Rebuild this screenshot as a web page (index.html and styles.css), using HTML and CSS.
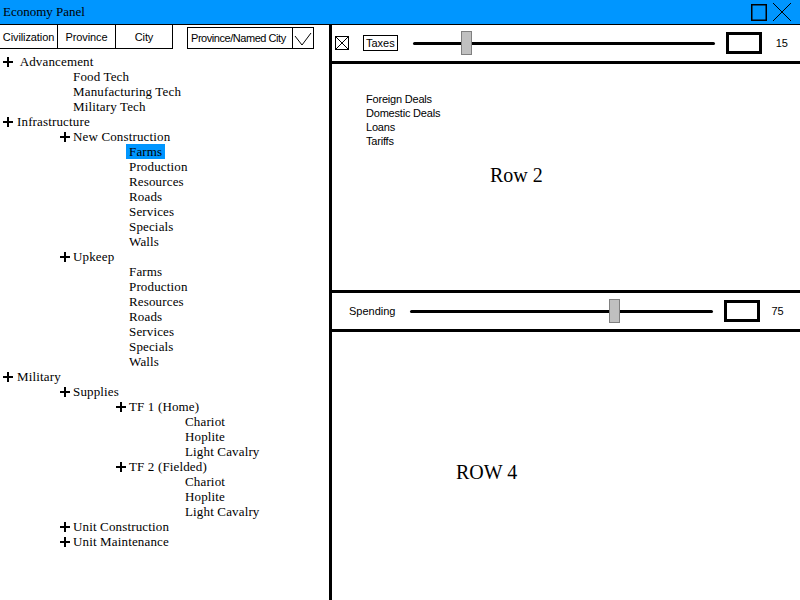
FILE: index.html
```html
<!DOCTYPE html>
<html lang="en">
<head>
  <meta charset="UTF-8">
  <title>Economy Panel</title>
  <link rel="stylesheet" href="styles.css">
</head>
<body>
  <div class="window">
    <div class="titlebar">
      <span class="title">Economy Panel</span>
      <div class="controls">
        <svg class="ctl" width="16" height="17" viewBox="0 0 16 17"><rect x="0.75" y="0.75" width="14.5" height="15.5" fill="none" stroke="#000" stroke-width="1.5"/></svg>
        <svg class="ctl" width="18" height="18" viewBox="0 0 18 18"><path d="M0 0L18 18M18 0L0 18" stroke="#000" stroke-width="1"/></svg>
      </div>
    </div>

    <div class="main">
      <!-- Arvore de categorias -->
      <div class="left">
        <div class="toolbar">
          <div class="tabs">
            <div class="tab">Civilization</div>
            <div class="tab">Province</div>
            <div class="tab">City</div>
          </div>
          <div class="dropdown">
            <span class="dropdown-text">Province/Named City</span>
            <span class="dropdown-arrow">
              <svg width="20" height="21" viewBox="0 0 20 21"><polyline points="2,8 9,17 18,5" fill="none" stroke="#000" stroke-width="1"/></svg>
            </span>
          </div>
        </div>
        <div class="tree" id="tree"></div>
      </div>

      <!-- Paineis da direita -->
      <div class="right">
        <div class="row row-slider">
          <span class="checkbox">
            <svg width="14" height="14" viewBox="0 0 14 14"><rect x="0.5" y="0.5" width="13" height="13" fill="none" stroke="#000"/><path d="M1 1L13 13M13 1L1 13" stroke="#000"/></svg>
          </span>
          <span class="label-box">Taxes</span>
          <div class="slider slider-taxes">
            <div class="track"></div>
            <div class="thumb" style="left: 48px"></div>
          </div>
          <div class="value-box"></div>
          <span class="value">15</span>
        </div>

        <div class="row row-content">
          <ul class="deal-list">
            <li>Foreign Deals</li>
            <li>Domestic Deals</li>
            <li>Loans</li>
            <li>Tariffs</li>
          </ul>
          <div class="big-label row2-label">Row 2</div>
        </div>

        <div class="row row-slider row-spending">
          <span class="plain-label">Spending</span>
          <div class="slider slider-spending">
            <div class="track"></div>
            <div class="thumb" style="left: 199px"></div>
          </div>
          <div class="value-box"></div>
          <span class="value">75</span>
        </div>

        <div class="row row-last">
          <div class="big-label row4-label">ROW 4</div>
        </div>
      </div>
    </div>
  </div>

  <script>
    // [nivel, tem "+", texto, selecionado]
    const itens = [
      [0, true, " Advancement"],
      [1, false, "Food Tech"],
      [1, false, "Manufacturing Tech"],
      [1, false, "Military Tech"],
      [0, true, "Infrastructure"],
      [1, true, "New Construction"],
      [2, false, "Farms", true],
      [2, false, "Production"],
      [2, false, "Resources"],
      [2, false, "Roads"],
      [2, false, "Services"],
      [2, false, "Specials"],
      [2, false, "Walls"],
      [1, true, "Upkeep"],
      [2, false, "Farms"],
      [2, false, "Production"],
      [2, false, "Resources"],
      [2, false, "Roads"],
      [2, false, "Services"],
      [2, false, "Specials"],
      [2, false, "Walls"],
      [0, true, "Military"],
      [1, true, "Supplies"],
      [2, true, "TF 1 (Home)"],
      [3, false, "Chariot"],
      [3, false, "Hoplite"],
      [3, false, "Light Cavalry"],
      [2, true, "TF 2 (Fielded)"],
      [3, false, "Chariot"],
      [3, false, "Hoplite"],
      [3, false, "Light Cavalry"],
      [1, true, "Unit Construction"],
      [1, true, "Unit Maintenance"]
    ];

    const tree = document.getElementById('tree');
    const plusSvg = '<svg class="plus" width="10" height="10" viewBox="0 0 10 10"><path d="M0 5H10M5 0V10" stroke="#000" stroke-width="2"/></svg>';

    itens.forEach(item => {
      const linha = document.createElement('div');
      linha.className = 'node lv' + item[0];
      const texto = document.createElement('span');
      texto.className = item[3] ? 'node-text selected' : 'node-text';
      texto.textContent = item[2];
      if (item[1]) linha.insertAdjacentHTML('beforeend', plusSvg);
      linha.appendChild(texto);
      tree.appendChild(linha);
    });
  </script>
</body>
</html>
```

FILE: styles.css
```css
/* Estilos gerais */
body {
  margin: 0;
  padding: 0;
  background-color: #fff;
  font-family: "Liberation Serif", "Times New Roman", serif;
  color: #000;
}

.window {
  width: 800px;
  height: 600px;
  display: flex;
  flex-direction: column;
  overflow: hidden;
}

/* Barra de titulo */
.titlebar {
  height: 25px;
  box-sizing: border-box;
  background-color: #0096ff;
  border-bottom: 1px solid #000;
  display: flex;
  align-items: center;
  justify-content: space-between;
  padding-left: 3px;
  font-size: 13px;
}

.controls {
  display: flex;
  align-items: center;
  gap: 6px;
  margin-right: 9px;
}

.ctl {
  display: block;
}

.main {
  flex: 1;
  display: flex;
  min-height: 0;
}

/* Coluna da esquerda */
.left {
  width: 332px;
  box-sizing: border-box;
  border-right: 3px solid #000;
  display: flex;
  flex-direction: column;
}

.toolbar {
  display: flex;
  align-items: flex-start;
}

.tabs {
  display: flex;
  height: 24px;
}

.tab {
  width: 58px;
  box-sizing: border-box;
  border-right: 1px solid #000;
  border-bottom: 1px solid #000;
  display: flex;
  align-items: center;
  justify-content: center;
  font-family: "Liberation Sans", Arial, sans-serif;
  font-size: 11px;
  letter-spacing: -0.1px;
}

.tab:last-child {
  width: 57px;
}

.dropdown {
  margin-left: 14px;
  margin-top: 2px;
  width: 127px;
  height: 22px;
  box-sizing: border-box;
  border: 1px solid #000;
  display: flex;
  font-family: "Liberation Sans", Arial, sans-serif;
  font-size: 11px;
}

.dropdown-text {
  flex: 1;
  display: flex;
  align-items: center;
  padding-left: 3px;
  white-space: nowrap;
  letter-spacing: -0.45px;
  overflow: hidden;
}

.dropdown-arrow {
  width: 20px;
  flex: none;
  border-left: 1px solid #000;
}

.dropdown-arrow svg {
  display: block;
}

/* Arvore */
.tree {
  padding-top: 5px;
  font-size: 13px;
  letter-spacing: 0.15px;
}

.node {
  height: 15px;
  line-height: 15px;
  display: flex;
  align-items: center;
  white-space: pre;
}

.lv0 { padding-left: 17px; }
.lv1 { padding-left: 73px; }
.lv2 { padding-left: 129px; }
.lv3 { padding-left: 185px; }

.plus {
  flex: none;
  margin-left: -13px;
  margin-right: 3px;
}

.lv0 .plus {
  margin-left: -14px;
  margin-right: 4px;
}

.node-text.selected {
  background-color: #0096ff;
  padding: 0 3px;
  margin-left: -3px;
}

/* Coluna da direita */
.right {
  flex: 1;
  display: flex;
  flex-direction: column;
}

.row {
  box-sizing: border-box;
  border-bottom: 3px solid #000;
}

.row-slider {
  height: 39px;
  display: flex;
  align-items: center;
  padding-left: 3px;
  font-family: "Liberation Sans", Arial, sans-serif;
  font-size: 11px;
}

.checkbox svg {
  display: block;
}

.label-box {
  margin-left: 14px;
  border: 1px solid #000;
  padding: 0 2px;
  height: 14px;
  line-height: 14px;
}

.slider {
  position: relative;
  height: 24px;
}

.slider-taxes {
  width: 302px;
  margin-left: 15px;
}

.slider-spending {
  width: 303px;
  margin-left: 14px;
}

.track {
  position: absolute;
  left: 0;
  right: 0;
  top: 11px;
  height: 3px;
  background-color: #000;
  border-radius: 2px;
}

.thumb {
  position: absolute;
  top: 0;
  width: 11px;
  height: 24px;
  box-sizing: border-box;
  background-color: #c0c0c0;
  border: 1px solid #808080;
}

.value-box {
  width: 36px;
  height: 22px;
  box-sizing: border-box;
  border: 3px solid #000;
  margin-left: 11px;
}

.value {
  margin-left: 14px;
}

.row-spending {
  padding-left: 17px;
}

.row-spending .value {
  margin-left: 12px;
}

.row-content {
  height: 229px;
  padding: 28px 0 0 34px;
}

.deal-list {
  list-style: none;
  margin: 0;
  padding: 0;
  font-family: "Liberation Sans", Arial, sans-serif;
  font-size: 11px;
  line-height: 14px;
  letter-spacing: -0.2px;
}

.big-label {
  font-size: 20px;
  line-height: 23px;
}

.row2-label {
  margin-top: 16px;
  padding-left: 124px;
}

.row-last {
  flex: 1;
  border-bottom: none;
  padding: 129px 0 0 124px;
}
```
